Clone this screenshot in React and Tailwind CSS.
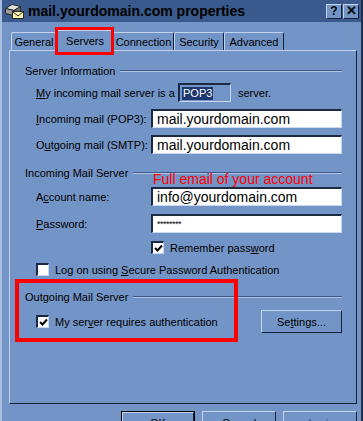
import React from 'react';

// classic 3D edges
const raised = 'border border-t-[#c3d3ee] border-l-[#c3d3ee] border-r-[#16223a] border-b-[#16223a]';
const sunken = 'border-t-2 border-l-2 border-r border-b border-t-[#1c2943] border-l-[#1c2943] border-r-[#c9d7ef] border-b-[#c9d7ef]';

const MailIcon = () => (
    <svg width="21" height="18" viewBox="0 0 21 18">
        <path d="M1.5 6.5 L8 2.5 L16.5 4.5 L10 8.5 Z" fill="#e0e0e0" stroke="#2a2a2a" />
        <path d="M1.5 6.5 L10 8.5 L10 13.5 L1.5 11.5 Z" fill="#9c9c9c" stroke="#2a2a2a" />
        <path d="M10 8.5 L16.5 4.5 L16.5 9" fill="#6e6e6e" stroke="#2a2a2a" />
        <rect x="8.5" y="9.5" width="11" height="7" fill="#fff6b0" stroke="#2a2a2a" />
        <path d="M8.5 9.5 L14 14 L19.5 9.5" fill="none" stroke="#2a2a2a" />
    </svg>
);

const Check = ({ checked }) => (
    <div className={`w-[13px] h-[13px] bg-white shrink-0 flex items-center justify-center ${sunken}`}>
        {checked && (
            <svg width="9" height="9" viewBox="0 0 9 9">
                <path d="M1 4 L3.5 6.5 L8 1.5" fill="none" stroke="#000" strokeWidth="2" />
            </svg>
        )}
    </div>
);

const GroupTitle = ({ children }) => (
    <div className="flex items-center h-[14px]">
        <span className="pr-[5px]">{children}</span>
        <div className="flex-1 border-t border-b border-t-[#3d5888] border-b-[#b3c6e8]" />
    </div>
);

const Field = ({ label, value, small }) => (
    <div className="flex items-center h-[19px] ml-[11px]">
        <span className="w-[115px] shrink-0">{label}</span>
        <div className={`flex-1 h-[19px] bg-white flex items-center pl-[4px] ${sunken}`}>
            {small
                ? <span className="text-[9px] leading-none tracking-[-0.5px]">********</span>
                : <span className="text-[14px] leading-none">{value}</span>}
        </div>
    </div>
);

const tabs = [
    { id: 'general', label: 'General', w: 'w-[46px]' },
    { id: 'servers', label: 'Servers', w: 'w-[58px]' },
    { id: 'connection', label: 'Connection', w: 'w-[61px]' },
    { id: 'security', label: 'Security', w: 'w-[50px]' },
    { id: 'advanced', label: 'Advanced', w: 'w-[60px]' },
];

export default function App() {
    const active = 'servers';
    return (
        <div className="relative w-[363px] h-[421px] overflow-hidden bg-[#7394c6] text-black text-[11px] leading-[14px] font-['Liberation_Sans',Arial,sans-serif] border-l-2 border-l-[#a9bde0] border-r-2 border-r-[#1f2f4d]">
            {/* Title bar */}
            <div className="h-[22px] bg-[#3a5a8d] flex items-center pl-[2px] pr-[2px]">
                <MailIcon />
                <span className="ml-[3px] text-[14px] font-bold leading-none">mail.yourdomain.com properties</span>
                <div className="ml-auto flex gap-[1px]">
                    <div className={`w-[16px] h-[15px] bg-[#7394c6] flex items-center justify-center font-bold text-[12px] ${raised}`}>?</div>
                    <div className={`w-[16px] h-[15px] bg-[#7394c6] flex items-center justify-center font-bold text-[13px] ${raised}`}>✕</div>
                </div>
            </div>

            {/* Tabs */}
            <div className="flex items-end h-[28px] pl-[9px]">
                {tabs.map(t => t.id === active ? (
                    <div key={t.id} className={`${t.w} -mx-[1px] h-[22px] -mb-[2px] z-10 bg-[#7394c6] flex items-start justify-center pt-[3px] rounded-t-[2px] border border-b-0 border-t-[#c3d3ee] border-l-[#c3d3ee] border-r-[#16223a]`}>
                        {t.label}
                    </div>
                ) : (
                    <div key={t.id} className={`${t.w} h-[18px] flex items-center justify-center rounded-t-[2px] border border-b-0 border-t-[#c3d3ee] border-l-[#c3d3ee] border-r-[#16223a]`}>
                        {t.label}
                    </div>
                ))}
            </div>

            {/* Panel */}
            <div className={`ml-[7px] w-[348px] h-[354px] pl-[15px] pr-[14px] pt-[13px] ${raised}`}>
                <GroupTitle>Server Information</GroupTitle>
                <div className="flex items-center h-[19px] ml-[11px] mt-[5px]">
                    <span className="w-[142px] shrink-0"><u>M</u>y incoming mail server is a</span>
                    <div className={`w-[53px] h-[19px] flex items-center pl-[2px] ${sunken}`}>
                        <span className="bg-[#1d3770] text-white px-[1px] leading-[13px]">POP3</span>
                    </div>
                    <span className="ml-[7px]">server.</span>
                </div>
                <div className="mt-[7px]"><Field label={<><u>I</u>ncoming mail (POP3):</>} value="mail.yourdomain.com" /></div>
                <div className="mt-[7px]"><Field label={<>O<u>u</u>tgoing mail (SMTP):</>} value="mail.yourdomain.com" /></div>

                <div className="mt-[12px]"><GroupTitle>Incoming Mail Server</GroupTitle></div>
                <div className="mt-[7px]"><Field label={<>A<u>c</u>count name:</>} value="info@yourdomain.com" /></div>
                <div className="mt-[8px]"><Field label={<><u>P</u>assword:</>} small /></div>

                <div className="flex items-center h-[13px] mt-[8px] ml-[126px] gap-[6px]">
                    <Check checked />
                    <span>Remember pass<u>w</u>ord</span>
                </div>
                <div className="flex items-center h-[13px] mt-[9px] ml-[11px] gap-[6px]">
                    <Check />
                    <span>Log on using <u>S</u>ecure Password Authentication</span>
                </div>

                <div className="mt-[14px]"><GroupTitle>Outgoing Mail Server</GroupTitle></div>
                <div className="flex items-center h-[23px] mt-[6px] ml-[11px]">
                    <Check checked />
                    <span className="ml-[6px]">My ser<u>v</u>er requires authentication</span>
                    <div className={`ml-auto w-[81px] h-[23px] flex items-center justify-center border-r-[#000] border-b-[#000] ${raised}`}>
                        Se<u>t</u>tings...
                    </div>
                </div>
            </div>

            {/* Dialog buttons */}
            <div className="flex justify-end gap-[7px] pr-[4px] mt-[7px]">
                <div className="w-[74px] h-[23px] border border-black">
                    <div className={`h-full flex items-center justify-center ${raised}`}>OK</div>
                </div>
                <div className={`w-[74px] h-[23px] flex items-center justify-center ${raised}`}>Cancel</div>
                <div className={`w-[74px] h-[23px] flex items-center justify-center text-[#4a6696] ${raised}`}>Apply</div>
            </div>

            {/* Annotations */}
            <div className="absolute left-[53px] top-[27px] w-[59px] h-[28px] border-[3px] border-[#ff0000] z-20" />
            <div className="absolute left-[13px] top-[279px] w-[223px] h-[63px] border-4 border-[#ff0000] z-20" />
            <div className="absolute left-[151px] top-[171px] text-[14px] leading-[16px] text-[#ff0000]">Full email of your account</div>
        </div>
    );
}
